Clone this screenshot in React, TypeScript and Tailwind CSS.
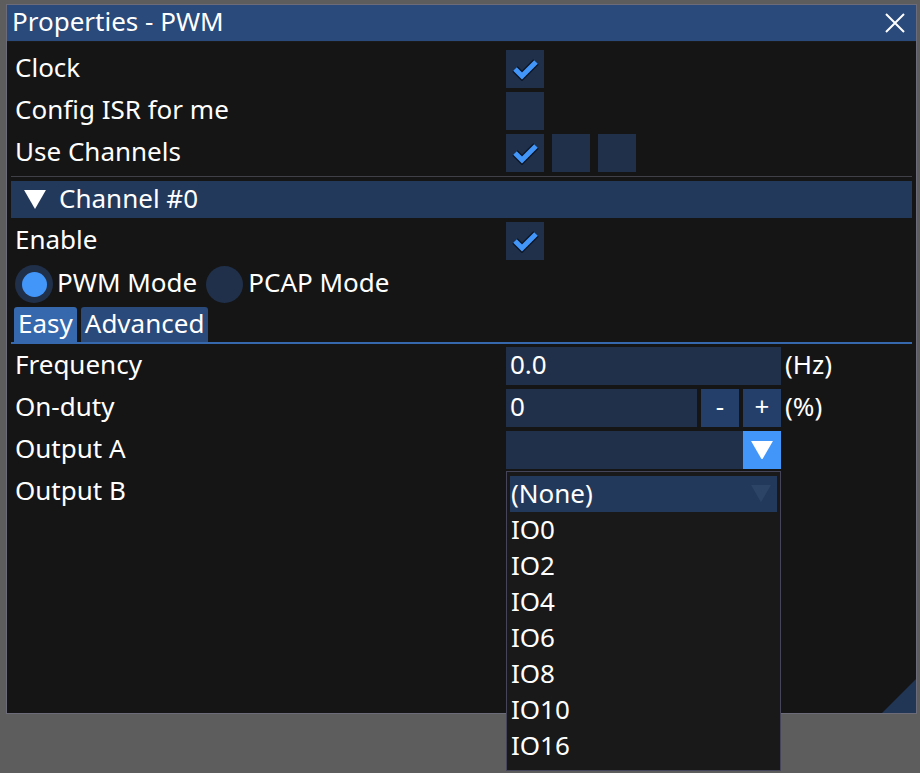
import React from "react";

const font = { fontFamily: '"Noto Sans", "DejaVu Sans", sans-serif' };

function Check({ on }: { on?: boolean }) {
  return (
    <div className="w-[38px] h-[38px] bg-[#20304a] flex items-center justify-center">
      {on && (
        <svg width="28" height="24" viewBox="0 0 28 24">
          <path d="M4 12 L11 19 L25 5" fill="none" stroke="#0b1525" strokeWidth="7.5" />
          <path d="M4 12 L11 19 L25 5" fill="none" stroke="#4296fa" strokeWidth="5" />
        </svg>
      )}
    </div>
  );
}

function Row({ label, children }: { label: string; children?: React.ReactNode }) {
  return (
    <div className="flex h-[38px] items-center">
      <div className="w-[495px] pl-[4px] pb-[5px] leading-none">{label}</div>
      <div className="flex items-center gap-[4px] h-full">{children}</div>
    </div>
  );
}

function Tri({ color, size = 22 }: { color: string; size?: number }) {
  return (
    <svg width={size} height={size * 0.86} viewBox="0 0 22 19">
      <path d="M0 0 L22 0 L11 19 Z" fill={color} />
    </svg>
  );
}

export default function App() {
  const items = ["IO0", "IO2", "IO4", "IO6", "IO8", "IO10", "IO16"];
  return (
    <div className="w-[920px] h-[773px] bg-[#5d5d5d] pt-[4px] pl-[6px] relative overflow-hidden text-white text-[26px]" style={font}>
      <div className="w-[911px] h-[710px] border border-[#6b6b7a] bg-[#151515] flex flex-col relative">
        {/* title bar */}
        <div className="h-[37px] bg-[#294a7a] flex items-center justify-between pl-[5px] pr-[10px] border-b border-[#1a1a1a]">
          <span className="leading-none pb-[4px]">Properties - PWM</span>
          <svg width="22" height="22" viewBox="0 0 22 22">
            <path d="M2 2 L20 20 M20 2 L2 20" stroke="#fff" strokeWidth="2" />
          </svg>
        </div>

        <div className="flex flex-col px-[4px] pt-[8px] gap-[4px]">
          <Row label="Clock">
            <Check on />
          </Row>
          <Row label="Config ISR for me">
            <Check />
          </Row>
          <Row label="Use Channels">
            <div className="flex gap-[8px]">
              <Check on />
              <Check />
              <Check />
            </div>
          </Row>

          <div className="h-px bg-[#404048]" />

          {/* collapsing header */}
          <div className="h-[37px] bg-[#23395b] flex items-center pl-[13px] gap-[13px]">
            <Tri color="#ffffff" />
            <span className="leading-none pb-[4px]">Channel #0</span>
          </div>

          <Row label="Enable">
            <Check on />
          </Row>

          {/* radio buttons */}
          <div className="flex items-center h-[40px] pl-[4px]">
            <div className="w-[38px] h-[38px] rounded-full bg-[#20304a] flex items-center justify-center">
              <div className="w-[25px] h-[25px] rounded-full bg-[#4296fa]" />
            </div>
            <span className="ml-[4px] leading-none pb-[4px]">PWM Mode</span>
            <div className="ml-[9px] w-[37px] h-[37px] rounded-full bg-[#20304a]" />
            <span className="ml-[5px] leading-none pb-[4px]">PCAP Mode</span>
          </div>

          {/* tab bar */}
          <div className="flex flex-col -mt-[1px]">
            <div className="flex gap-[4px] pl-[3px] h-[35px] items-end">
              <div className="h-[35px] px-[4px] pb-[4px] bg-[#3568ad] rounded-t-[3px] flex items-center leading-none">Easy</div>
              <div className="h-[35px] px-[4px] pb-[4px] bg-[#294a7a] rounded-t-[3px] flex items-center leading-none">Advanced</div>
            </div>
            <div className="h-[2px] bg-[#3568ad]" />
          </div>

          <div className="flex flex-col gap-[4px] -mt-[1px]">
            <Row label="Frequency">
              <div className="w-[275px] h-[38px] bg-[#20304a] flex items-center pl-[4px] pb-[4px] leading-none">0.0</div>
              <span className="leading-none pb-[4px]">(Hz)</span>
            </Row>
            <Row label="On-duty">
              <div className="w-[191px] h-[38px] bg-[#20304a] flex items-center pl-[4px] pb-[4px] leading-none">0</div>
              <div className="w-[38px] h-[38px] bg-[#24406a] flex items-center justify-center pb-[4px] leading-none">-</div>
              <div className="w-[38px] h-[38px] bg-[#24406a] flex items-center justify-center pb-[4px] leading-none">+</div>
              <span className="leading-none pb-[4px]">(%)</span>
            </Row>
            <Row label="Output A">
              <div className="w-[275px] h-[38px] bg-[#20304a] flex justify-end">
                <div className="w-[38px] h-[38px] bg-[#4296fa] flex items-center justify-center">
                  <Tri color="#ffffff" size={22} />
                </div>
              </div>
            </Row>
            <Row label="Output B" />
          </div>
        </div>

        {/* resize grip */}
        <svg className="absolute right-0 bottom-0" width="34" height="34" viewBox="0 0 34 34">
          <path d="M34 0 L34 34 L0 34 Z" fill="#213554" />
        </svg>
      </div>

      {/* combo popup */}
      <div className="absolute left-[506px] top-[471px] w-[275px] h-[300px] bg-[#191919] border border-[#45455a] flex flex-col px-[3px] pt-[4px]">
        <div className="h-[36px] bg-[#23395b] flex items-center justify-between pl-[1px] pr-[6px]">
          <span className="leading-none pb-[3px]">(None)</span>
          <Tri color="#2c4466" size={20} />
        </div>
        {items.map((it) => (
          <div key={it} className="h-[36px] flex items-center pl-[1px] pb-[3px] leading-none">
            {it}
          </div>
        ))}
      </div>
    </div>
  );
}
